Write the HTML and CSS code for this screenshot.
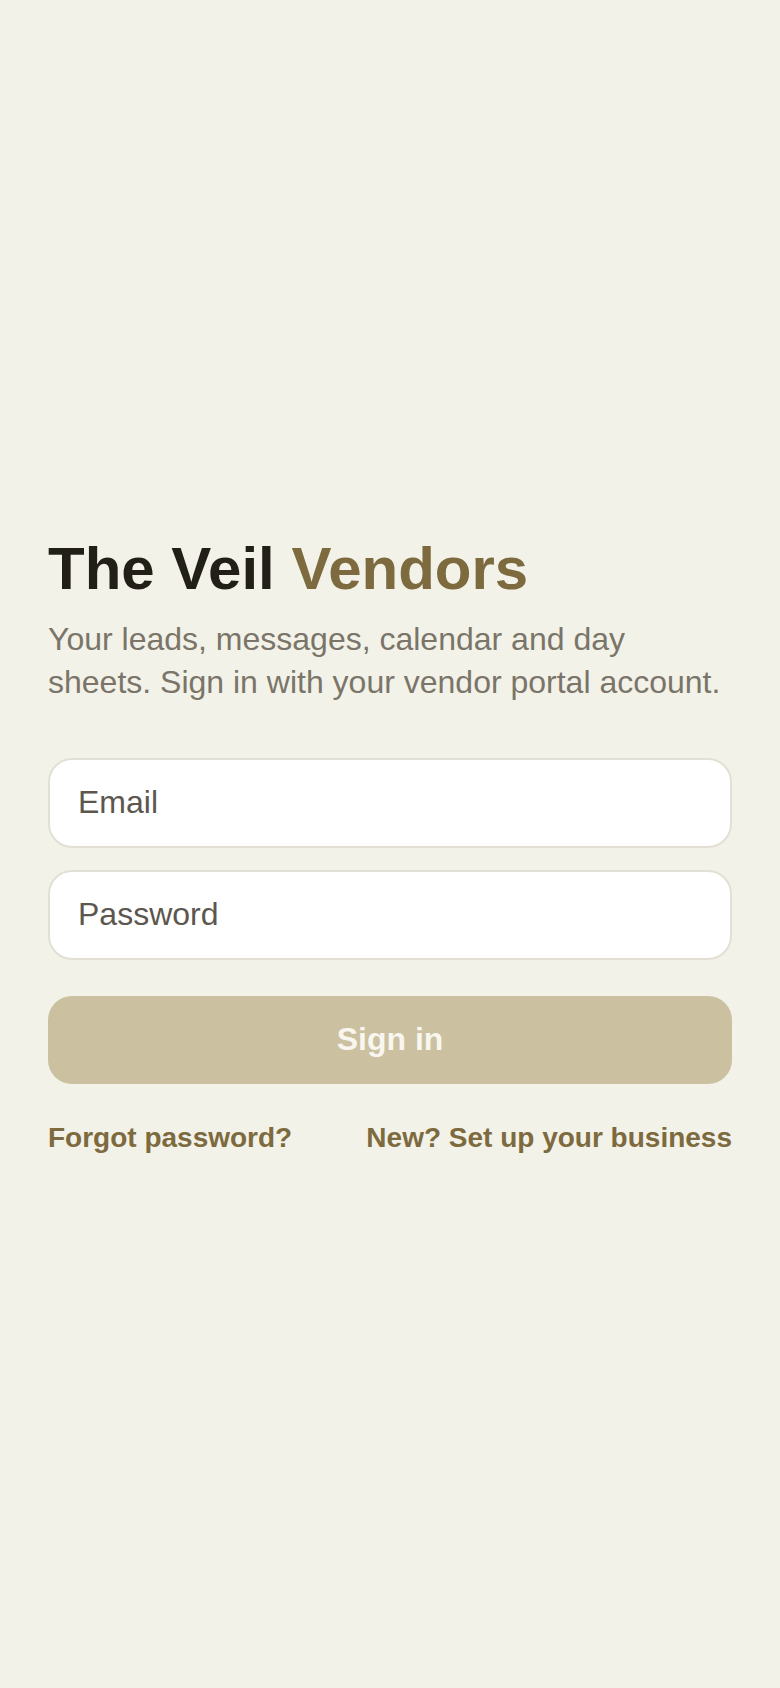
FILE: index.html
```html
<!DOCTYPE html>
<html lang="en">
<head>
    <meta charset="UTF-8">
    <meta name="viewport" content="width=device-width, initial-scale=1.0">
    <title>The Veil Vendors - Sign in</title>
    <link rel="stylesheet" href="styles.css">
</head>
<body>
    <main class="login">
        <!-- Brand heading -->
        <h1 class="brand">The Veil <span class="brand-accent">Vendors</span></h1>
        <p class="intro">Your leads, messages, calendar and day sheets. Sign in with your vendor portal account.</p>

        <!-- Sign in form -->
        <form class="login-form">
            <input class="field" type="email" placeholder="Email">
            <input class="field" type="password" placeholder="Password">
            <button class="button" type="submit">Sign in</button>
        </form>

        <div class="links">
            <a href="#">Forgot password?</a>
            <a href="#">New? Set up your business</a>
        </div>
    </main>
</body>
</html>
```

FILE: styles.css
```css
body {
    font-family: "Liberation Sans", Arial, sans-serif;
    background-color: #f2f2e9;
    color: #221f18;
    margin: 0;
    padding: 0;
}
.login {
    min-height: 100vh;
    box-sizing: border-box;
    padding: 0 48px;
    display: flex;
    flex-direction: column;
    justify-content: center;
}
.brand {
    font-size: 60px;
    line-height: 69px;
    font-weight: bold;
    margin: 0 0 15px;
    color: #221f18;
}
.brand-accent {
    color: #7d6a3e;
}
.intro {
    font-size: 32px;
    line-height: 43px;
    color: #7a7568;
    margin: 0 0 54px;
}
.login-form {
    display: flex;
    flex-direction: column;
    gap: 22px;
}
.field {
    height: 90px;
    box-sizing: border-box;
    padding: 0 28px;
    border: 2px solid #e2e0d5;
    border-radius: 24px;
    background-color: #fff;
    font-family: inherit;
    font-size: 32px;
    color: #221f18;
    outline: none;
}
.field::placeholder {
    color: #5c574e;
}
.button {
    height: 88px;
    margin-top: 14px;
    border: none;
    border-radius: 24px;
    background-color: #cbc0a0;
    color: #f8f6ee;
    font-family: inherit;
    font-size: 32px;
    font-weight: bold;
    cursor: pointer;
}
.links {
    display: flex;
    justify-content: space-between;
    margin-top: 37px;
    font-size: 28px;
    line-height: 34px;
    font-weight: bold;
}
.links a {
    color: #7d6a3e;
    text-decoration: none;
}
```
